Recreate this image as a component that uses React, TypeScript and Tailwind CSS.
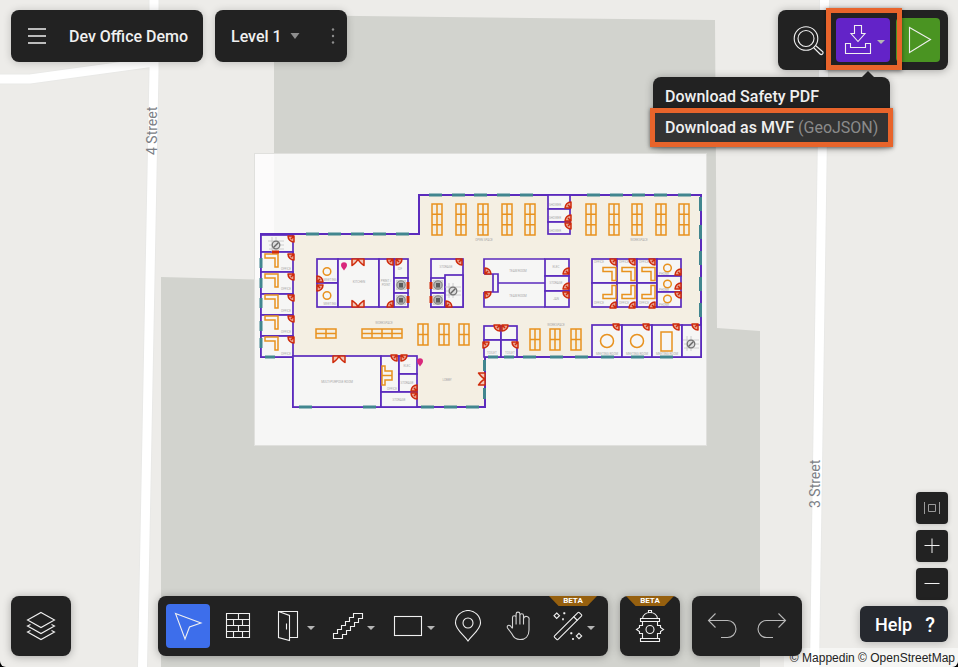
import type { ReactNode } from 'react';

const WALL = '#5b2bbd';
const DESK = '#e8921f';
const DOOR = '#cf2b0b';
const GLASS = '#41868f';

// [x, y, width, height]
const rooms = [
  [261, 235, 32, 17],
  [261, 252, 32, 20],
  [261, 272, 32, 22],
  [261, 294, 32, 21],
  [261, 315, 32, 21],
  [261, 336, 32, 21],
  [317, 259, 21, 24],
  [317, 283, 21, 24],
  [338, 259, 41, 48],
  [379, 259, 15, 48],
  [394, 259, 14, 19],
  [394, 278, 14, 15],
  [394, 293, 14, 14],
  [431, 259, 32, 48],
  [431, 278, 14, 15],
  [431, 293, 14, 14],
  [445, 275, 18, 32],
  [545, 259, 24, 17],
  [545, 276, 24, 15],
  [545, 291, 24, 16],
  [592, 259, 25, 24],
  [617, 259, 20, 24],
  [637, 259, 20, 24],
  [592, 283, 25, 24],
  [617, 283, 20, 24],
  [637, 283, 20, 24],
  [657, 259, 24, 17],
  [657, 276, 24, 16],
  [657, 292, 24, 15],
  [548, 195, 22, 14],
  [548, 209, 22, 13],
  [548, 222, 22, 12],
  [592, 325, 30, 32],
  [622, 325, 30, 32],
  [652, 325, 30, 32],
  [682, 325, 19, 32],
  [484, 326, 17, 14],
  [501, 326, 16, 14],
  [484, 340, 17, 17],
  [501, 340, 16, 17],
  [293, 356, 88, 51],
  [381, 356, 18, 36],
  [399, 356, 18, 18],
  [399, 374, 18, 18],
  [381, 392, 36, 15],
];

// [x of hinge corner, y of hinge corner, horizontal direction, vertical direction]
const doors = [
  [294, 236, -1, 1],
  [294, 254, -1, 1],
  [294, 274, -1, 1],
  [294, 295, -1, 1],
  [294, 316, -1, 1],
  [294, 337, -1, 1],
  [393, 259, -1, 1],
  [396, 259, 1, 1],
  [317, 282, 1, -1],
  [317, 285, 1, 1],
  [393, 307, -1, -1],
  [462, 259, -1, 1],
  [446, 307, 1, -1],
  [485, 274, 1, -1],
  [485, 292, 1, 1],
  [569, 274, -1, -1],
  [569, 289, -1, -1],
  [569, 292, -1, 1],
  [571, 208, -1, -1],
  [571, 221, -1, -1],
  [571, 223, -1, 1],
  [616, 259, -1, 1],
  [635, 259, -1, 1],
  [655, 259, -1, 1],
  [616, 308, -1, -1],
  [635, 308, -1, -1],
  [655, 308, -1, -1],
  [681, 275, -1, -1],
  [681, 289, -1, -1],
  [681, 292, -1, 1],
  [619, 324, -1, 1],
  [649, 324, -1, 1],
  [679, 324, -1, 1],
  [698, 324, -1, 1],
  [500, 325, -1, 1],
  [502, 325, 1, 1],
  [483, 342, 1, 1],
  [518, 342, -1, 1],
  [397, 355, -1, 1],
  [401, 355, 1, 1],
  [417, 391, -1, -1],
  [417, 393, -1, 1],
];

// [centre x, centre y, rotation]
const doubleDoors = [
  [358, 259, 0],
  [358, 307, 180],
  [339, 356, 0],
  [485, 379, 90],
];

// [x, y, columns, rows, width, height]
const desks = [
  ...[432, 456, 478, 502, 525, 586, 609, 632, 656, 679].map((x) => [x, 204, 2, 3, 10, 31]),
  ...[418, 439, 459].map((x) => [x, 324, 2, 2, 10, 21]),
  ...[530, 550, 571].map((x) => [x, 329, 2, 2, 10, 21]),
  [316, 329, 2, 2, 20, 9],
  [362, 329, 4, 2, 40, 9],
];

const windows = [
  ...[429, 452, 474, 497, 520, 587, 610, 632, 654, 678].map((x) => `M${x} 195h13`),
  ...[306, 328, 351, 373, 396].map((x) => `M${x} 234h13`),
  ...[265, 488, 504].map((x) => `M${x} 357h10`),
  ...[523, 550, 575, 601, 631, 660].map((x) => `M${x} 357h13`),
  ...[299, 363, 421, 444, 466].map((x) => `M${x} 407h13`),
  ...[197, 225, 251, 277, 303].map((y) => `M700.5 ${y}v14`),
  ...[258, 278, 298, 321, 338].map((y) => `M261 ${y}v10`),
  ...[360, 388].map((y) => `M484.5 ${y}v11`),
].join('');

const labels: [number, number, string][] = [
  [484, 241, 'OPEN SPACE'],
  [639, 241, 'WORKSPACE'],
  [384, 324, 'WORKSPACE'],
  [556, 326, 'WORKSPACE'],
  [337, 383, 'MULTI-PURPOSE ROOM'],
  [447, 381, 'LOBBY'],
  [359, 283, 'KITCHEN'],
  [386, 282, 'PRINT /'],
  [386, 286, 'POINT'],
  [400, 270, 'IDF'],
  [446, 268, 'STORAGE'],
  [518, 272, 'TEAM ROOM'],
  [518, 297, 'TEAM ROOM'],
  [556, 268, 'ELEC'],
  [556, 284, 'STORAGE'],
  [556, 300, 'JAN'],
  [286, 270, 'OFFICE'],
  [286, 290, 'OFFICE'],
  [286, 312, 'OFFICE'],
  [286, 333, 'OFFICE'],
  [286, 355, 'OFFICE'],
  [330, 281, 'MEETING'],
  [330, 305, 'MEETING'],
  [599, 263, 'OFFICE'],
  [624, 263, 'OFFICE'],
  [644, 263, 'OFFICE'],
  [599, 304, 'OFFICE'],
  [624, 304, 'OFFICE'],
  [644, 304, 'OFFICE'],
  [664, 275, 'PHONE'],
  [664, 291, 'PHONE'],
  [664, 306, 'PHONE'],
  [607, 355, 'MEETING ROOM'],
  [637, 355, 'MEETING ROOM'],
  [667, 355, 'MEETING ROOM'],
  [555, 206, 'SHOWER'],
  [555, 219, 'SHOWER'],
  [555, 232, 'SHOWER'],
  [492, 354, 'TOILET'],
  [510, 354, 'TOILET'],
  [392, 390, 'OFFICE'],
  [407, 367, 'ELEC'],
  [407, 384, 'STORAGE'],
  [399, 401, 'STORAGE'],
];

function Desk({ spec }: { spec: number[] }) {
  const [x, y, cols, rows, w, h] = spec;
  let d = `M${x} ${y}h${w}v${h}h${-w}z`;
  for (let c = 1; c < cols; c++) d += `M${x + (w / cols) * c} ${y}v${h}`;
  for (let r = 1; r < rows; r++) d += `M${x} ${y + (h / rows) * r}h${w}`;
  return <path d={d} />;
}

function Elevator({ x, y }: { x: number; y: number }) {
  return (
    <g transform={`translate(${x} ${y})`}>
      <rect x="-5" y="-5" width="10" height="10" fill="#cfcfcf" />
      <circle r="4.2" fill="#b5b5b5" stroke="#808080" strokeWidth="1" />
      <rect x="-2" y="-2" width="4" height="4.5" fill="#5c5c5c" />
    </g>
  );
}

function Stairwell({ x, y }: { x: number; y: number }) {
  return (
    <g transform={`translate(${x} ${y})`} fill="none">
      <path d="M-8 -4H8M-7 0H8M-7 4H8M-4 -8V7M0 -8V7" stroke="#c4c4c4" strokeWidth="0.8" />
      <circle r="3.8" stroke="#757575" strokeWidth="1.3" fill="#ddd" />
      <path d="M-2.5 2.5L2.5 -2.5" stroke="#666" strokeWidth="1.4" />
    </g>
  );
}

function Pin({ x, y }: { x: number; y: number }) {
  return <path transform={`translate(${x} ${y})`} d="M0 4.5C-1 2.5 -3 1.5 -3 -0.8A3 3 0 0 1 3 -0.8C3 1.5 1 2.5 0 4.5Z" fill="#d9287c" />;
}

function FloorPlan() {
  return (
    <g>
      <path
        d="M261 234H419V195H701V357H485V407H293V357H261Z"
        fill="#f4efe3"
        stroke={WALL}
        strokeWidth="2"
      />
      <path d="M484 259H545V307H484V292H493V274H484Z" fill="#f6f6f5" stroke="none" />
      <g fill="#f6f6f5" stroke={WALL} strokeWidth="1.7">
        {rooms.map(([x, y, w, h], i) => (
          <rect key={i} x={x} y={y} width={w} height={h} />
        ))}
      </g>
      <path
        d="M484 274V259H545M484 292V307H545M493 274H498V292H493ZM484 274H493M484 292H493M498 283H545"
        fill="none"
        stroke={WALL}
        strokeWidth="1.7"
      />
      <path d={windows} stroke={GLASS} strokeWidth="3" fill="none" />

      <g stroke={DESK} strokeWidth="1.5" fill="none">
        {desks.map((spec, i) => (
          <Desk key={i} spec={spec} />
        ))}
        {[254, 274, 295, 316, 337].map((y) => (
          <path key={y} d={`M265 ${y}H278V${y + 13}H275V${y + 4}H265Z`} />
        ))}
        {[603, 622, 642].map((x) => (
          <path key={x} d={`M${x} 267.5h13v13h-4v-9h-9zM${x} 298.5h13v-13h-4v9h-9z`} />
        ))}
        <path d="M382 366H385V371H392V380H385V385H382ZM382 375.5H392" />
        <rect x="661" y="332" width="11" height="19" />
        <circle cx="607" cy="341" r="6.5" />
        <circle cx="637" cy="341" r="6.5" />
        <circle cx="327" cy="271.5" r="3.8" />
        <circle cx="327" cy="295.5" r="3.8" />
        <circle cx="667.5" cy="268" r="3.8" />
        <circle cx="667.5" cy="284" r="3.8" />
        <circle cx="667.5" cy="299" r="3.8" />
      </g>

      <Stairwell x={276} y={245} />
      <Stairwell x={453} y={291} />
      <Stairwell x={691} y={344} />
      <Elevator x={401} y={285} />
      <Elevator x={401} y={300} />
      <Elevator x={438} y={285} />
      <Elevator x={438} y={300} />

      <g fill="#a8a8a8" fontSize="3" textAnchor="middle">
        {labels.map(([x, y, text], i) => (
          <text key={i} x={x} y={y}>
            {text}
          </text>
        ))}
      </g>

      <g stroke={DOOR} strokeWidth="1.5" fill="#e7a493" strokeLinejoin="round">
        {doors.map(([x, y, sx, sy], i) => (
          <path key={i} transform={`translate(${x} ${y}) scale(${sx} ${sy})`} d="M0 0H6A6 6 0 0 1 0 6ZM0 0L3 3" />
        ))}
        {doubleDoors.map(([x, y, turn], i) => (
          <path
            key={i}
            transform={`translate(${x} ${y}) rotate(${turn})`}
            d="M-6 0H6V6.5C4 5 1 3 0 0C-1 3 -4 5 -6 6.5Z"
            fill="#f0c8bb"
          />
        ))}
      </g>
      <path d="M408 282v7M408 296v7M431 282v7M431 296v7M272 252h7" stroke={DOOR} strokeWidth="3" />
      <Pin x={344} y={266} />
      <Pin x={420} y={362} />
    </g>
  );
}

function MapCanvas() {
  return (
    <svg
      viewBox="0 0 958 667"
      preserveAspectRatio="xMidYMid slice"
      className="absolute inset-0 h-full w-full rounded-b-md bg-[#edece9] font-[Roboto,sans-serif]"
      role="img"
      aria-label="Floor plan of Level 1"
    >
      <path d="M274 15L715 20L717 328L760 331V667H161V277L274 280Z" fill="#d2d3ce" />
      <g fill="none" stroke="#e9e9e7" strokeWidth="11">
        <path d="M0 79H30L154 62" />
        <path d="M154 0V70L142.5 667" />
        <path d="M824.5 0L814.5 667" />
      </g>
      <g fill="none" stroke="#fff" strokeWidth="9">
        <path d="M0 79H30L154 62" />
        <path d="M154 0V70L142.5 667" />
        <path d="M824.5 0L814.5 667" />
      </g>
      <g fill="#7b7e85" fontSize="14">
        <text transform="translate(157 155) rotate(-90)">4 Street</text>
        <text transform="translate(820 508) rotate(-90)">3 Street</text>
      </g>
      <rect x="254.5" y="153.5" width="452" height="292" fill="#fff" fillOpacity="0.8" stroke="#e0e0dd" strokeWidth="1" />
      <FloorPlan />
    </svg>
  );
}

function Icon({ children }: { children: ReactNode }) {
  return (
    <svg width="32" height="32" viewBox="0 0 32 32" fill="none" stroke="currentColor" strokeWidth="1.1" className="shrink-0" aria-hidden="true">
      {children}
    </svg>
  );
}

function Caret() {
  return (
    <svg width="8" height="4" viewBox="0 0 8 4" className="mt-1 shrink-0 fill-[#b5b5b5]" aria-hidden="true">
      <path d="M0 0H8L4 4Z" />
    </svg>
  );
}

function Panel({ children }: { children: ReactNode }) {
  return <div className="flex gap-1.5 rounded-lg bg-[#222222] p-2 shadow-[0_1px_8px_rgba(0,0,0,0.3)]">{children}</div>;
}

function Beta() {
  return (
    <span className="absolute -top-2 left-1/2 h-2.5 w-12 -translate-x-1/2 bg-[#96600f] text-center text-[8px] leading-[10px] font-bold text-white [clip-path:polygon(0_0,100%_0,80%_100%,20%_100%)]">
      BETA
    </span>
  );
}

function ToolButton({ label, active, menu, beta, children }: { label: string; active?: boolean; menu?: boolean; beta?: boolean; children: ReactNode }) {
  return (
    <button
      type="button"
      aria-label={label}
      className={`relative flex h-11 items-center gap-[3px] rounded pl-1.5 ${menu ? 'w-[54px]' : 'w-11'} ${active ? 'bg-[#3d6eeb]' : ''}`}
    >
      <Icon>{children}</Icon>
      {menu && <Caret />}
      {beta && <Beta />}
    </button>
  );
}

function DownloadMenu() {
  return (
    <div className="relative">
      <button type="button" aria-label="Download" aria-expanded="true" className="flex h-11 w-[54px] items-center gap-[3px] rounded bg-[#6323c8] pl-1.5">
        <Icon>
          <path d="M12.5 1.5H19.5V9.5H23L16 17.5L9 9.5H12.5Z" />
          <path d="M3.5 19.5H8.5V23.5H23.5V19.5H28.5V29.5H3.5Z" />
        </Icon>
        <Caret />
      </button>
      <div className="pointer-events-none absolute -top-2.5 -right-3 -bottom-2 -left-2.5 border-5 border-[#e8642b] shadow-[0_1px_4px_rgba(0,0,0,0.5)]" />

      <div className="absolute top-full right-0 mt-[15px] w-[237px] rounded-lg bg-[#222222] py-1 text-base shadow-[0_1px_8px_rgba(0,0,0,0.3)]">
        <span className="absolute -top-1.5 right-4 h-1.5 w-3 bg-[#222222] [clip-path:polygon(50%_0,100%_100%,0_100%)]" />
        <button type="button" className="flex h-[31px] w-full items-center px-3 font-medium">
          Download Safety PDF
        </button>
        <button type="button" className="relative flex h-[31px] w-full items-center gap-1 bg-[#333333] px-3 font-medium whitespace-nowrap">
          Download as MVF <span className="font-normal text-[#8b8b8b]">(GeoJSON)</span>
          <span className="pointer-events-none absolute -inset-x-[3px] -inset-y-1 border-5 border-[#e8642b] shadow-[0_1px_4px_rgba(0,0,0,0.5)]" />
        </button>
      </div>
    </div>
  );
}

function Header() {
  return (
    <header className="flex items-start justify-between pt-2.5 pr-2.5 pl-[11px]">
      <div className="flex gap-3">
        <div className="flex h-13 w-48 items-center gap-[22px] rounded-lg bg-[#222222] pl-4 shadow-[0_1px_8px_rgba(0,0,0,0.2)]">
          <button type="button" aria-label="Menu">
            <svg width="20" height="16" viewBox="0 0 20 16" stroke="currentColor" strokeWidth="1.6" aria-hidden="true">
              <path d="M1 1H19M1 8H19M1 15H19" />
            </svg>
          </button>
          <h1 className="pt-0.5 text-base font-medium whitespace-nowrap">Dev Office Demo</h1>
        </div>
        <div className="flex h-13 w-33 items-center justify-between rounded-lg bg-[#222222] pr-3 pl-4 shadow-[0_1px_8px_rgba(0,0,0,0.2)]">
          <div className="relative flex items-center">
            <select aria-label="Level" className="w-[69px] appearance-none bg-transparent pt-0.5 text-base font-medium outline-none">
              <option>Level 1</option>
            </select>
            <svg width="10" height="6" viewBox="0 0 10 6" className="pointer-events-none absolute right-0 fill-[#8e8e8e]" aria-hidden="true">
              <path d="M0.5 0H9.5L5 6Z" />
            </svg>
          </div>
          <button type="button" aria-label="More options">
            <svg width="4" height="16" viewBox="0 0 4 16" className="fill-[#8e8e8e]" aria-hidden="true">
              <circle cx="2" cy="1.5" r="1.2" />
              <circle cx="2" cy="8" r="1.2" />
              <circle cx="2" cy="14.5" r="1.2" />
            </svg>
          </button>
        </div>
      </div>

      <Panel>
        <ToolButton label="Search">
          <circle cx="14" cy="14.5" r="11.8" />
          <circle cx="14" cy="14.5" r="8" />
          <path d="M21.5 23.5L28 30a1.5 1.5 0 0 0 2.5 -2.5L23.5 21.5" />
        </ToolButton>
        <DownloadMenu />
        <button type="button" aria-label="Preview" className="flex h-11 w-11 items-center rounded bg-[#4a9422] pl-1.5">
          <Icon>
            <path d="M7.5 3.5L28.5 15.5L7.5 28.5Z" />
          </Icon>
        </button>
      </Panel>
    </header>
  );
}

function Toolbar() {
  return (
    <div className="flex gap-3">
      <Panel>
        <ToolButton label="Select" active>
          <path d="M3.5 3.5L29 13L17.5 17L13 29Z" />
        </ToolButton>
        <ToolButton label="Walls">
          <path d="M4.5 3.5H27.5V27.5H4.5ZM4.5 9.5H27.5M4.5 15.5H27.5M4.5 21.5H27.5M16.5 3.5V9.5M16.5 15.5V21.5M11.5 9.5V15.5M20.5 9.5V15.5M11.5 21.5V27.5M20.5 21.5V27.5" />
        </ToolButton>
        <ToolButton label="Doors" menu>
          <path d="M6.5 1.5L17.5 5.5V30.5L6.5 27.5ZM6.5 1.5H25.5V27.5H17.5M14.5 13.5V19.5" />
        </ToolButton>
        <ToolButton label="Stairs" menu>
          <path d="M30.5 3.5H21.5V7.5H17.5V11.5H13.5V15.5H9.5V19.5H5.5V23.5H1.5V28.5H10.5V24.5H14.5V20.5H18.5V16.5H22.5V12.5H26.5V8.5H30.5Z" />
        </ToolButton>
        <ToolButton label="Areas" menu>
          <rect x="2.5" y="6.5" width="27" height="19" />
        </ToolButton>
        <ToolButton label="Place marker">
          <path d="M16 31C12 25 3.5 19.5 3.5 13A12.5 12.5 0 0 1 28.5 13C28.5 19.5 20 25 16 31Z" />
          <circle cx="16" cy="13" r="5" />
        </ToolButton>
        <ToolButton label="Pan">
          <path
            d="M10.5 18V7.5a1.8 1.8 0 0 1 3.6 0V14.5M14.100 7V4a1.900 1.900 0 0 1 3.800 0V14.500M17.900 5.500a1.800 1.800 0 0 1 3.600 0V14.500M21.500 9.500V8.500a1.800 1.800 0 0 1 5.500 1.500V20C27 26 23.500 29.500 18 29.500C13.500 29.500 11.500 27.500 10 24L5.500 18C4.500 15.500 7 14.500 8.500 16L10.500 18.500"
            stroke="#d5d5d5"
          />
        </ToolButton>
        <ToolButton label="Magic tools" menu beta>
          <rect x="-1.5" y="13.5" width="35" height="5" rx="1" transform="rotate(-45 16 16)" />
          <path d="M21.5 6.5L25.5 10.5" />
          <path d="M4.7 3L7.5 5.7L4.7 8.5L2 5.7ZM27 23.3L29.7 26L27 28.7L24.3 26Z" />
          <path d="M12.3 2.3v2M11.3 3.3h2M11 8.3v2M19.3 22.3v2M18.3 23.3h2M21 28v2" strokeWidth="1.6" />
        </ToolButton>
      </Panel>
      <Panel>
        <ToolButton label="Safety equipment" beta>
          <path d="M14.5 2.5V0.5H17.5V2.5M8.5 8.5C9 5 12 2.5 16 2.5S23 5 23.5 8.5M6.5 8.5H25.5V11.5H6.5ZM8.5 11.5V15.5H5.5V17.5L2.5 19.5L5.5 21.5V23.5H8.5V28M23.5 11.5V15.5H26.5V17.5L29.5 19.5L26.5 21.5V23.5H23.5V28M6.5 28.5H25.5V31.5H6.5Z" />
          <circle cx="16" cy="19.5" r="4" />
        </ToolButton>
      </Panel>
      <Panel>
        <ToolButton label="Undo">
          <path d="M9.5 3.5L2.5 10.5L9.5 17.5M2.5 10.5H21.5A8.5 8.5 0 0 1 21.5 27.5H15" stroke="#b9b9b9" />
        </ToolButton>
        <ToolButton label="Redo">
          <path d="M22.5 3.5L29.5 10.5L22.5 17.5M29.5 10.5H10.5A8.5 8.5 0 0 0 10.5 27.5H17" stroke="#b9b9b9" />
        </ToolButton>
      </Panel>
    </div>
  );
}

function ZoomButton({ label, children }: { label: string; children: ReactNode }) {
  return (
    <button type="button" aria-label={label} className="flex h-8 w-8 items-center justify-center rounded bg-[#222222] shadow-[0_1px_5px_rgba(0,0,0,0.2)]">
      <svg width="16" height="16" viewBox="0 0 16 16" fill="none" stroke="currentColor" aria-hidden="true">
        {children}
      </svg>
    </button>
  );
}

export default function App() {
  return (
    <div className="relative flex min-h-screen flex-col justify-between bg-black font-[Roboto,sans-serif] text-[#f0f0f0]">
      <MapCanvas />
      <p className="absolute right-0 bottom-0 rounded-br-md bg-white/50 pt-px pr-[3px] pl-1.5 font-['Liberation_Sans',sans-serif] text-xs leading-[18px] text-[#222222]">
        © <a href="#mappedin">Mappedin</a> © <a href="#osm">OpenStreetMap</a>
      </p>

      <div className="relative z-10">
        <Header />
      </div>

      <footer className="relative grid grid-cols-[1fr_auto_1fr] items-end pr-[9px] pb-[11px] pl-[11px]">
        <div className="flex">
          <Panel>
            <ToolButton label="Layers">
              <path d="M16 2.5L29.5 10L16 17.5L2.5 10ZM5.5 14.5L2.5 16L16 23.5L29.5 16L26.5 14.5M5.5 20.5L2.5 22L16 29.5L29.5 22L26.5 20.5" />
            </ToolButton>
          </Panel>
        </div>
        <Toolbar />
        <div className="flex flex-col items-end gap-1.5 pr-px pb-3.5">
          <ZoomButton label="Fit to view">
            <path d="M0.5 2V14M15.5 2V14M4.5 4.5H11.5V11.5H4.5Z" stroke="#9a9a9a" />
          </ZoomButton>
          <ZoomButton label="Zoom in">
            <path d="M0.5 7.5H15.5M8 0.5V15" />
          </ZoomButton>
          <ZoomButton label="Zoom out">
            <path d="M0.5 7.5H15.5" />
          </ZoomButton>
          <button type="button" className="flex h-9 w-22 items-center justify-between rounded-md bg-[#26292f] pr-[13px] pl-[15px] pt-0.5 text-lg font-medium text-white shadow-[0_1px_10px_rgba(0,0,0,0.25)]">
            Help <span className="text-xl">?</span>
          </button>
        </div>
      </footer>
    </div>
  );
}
